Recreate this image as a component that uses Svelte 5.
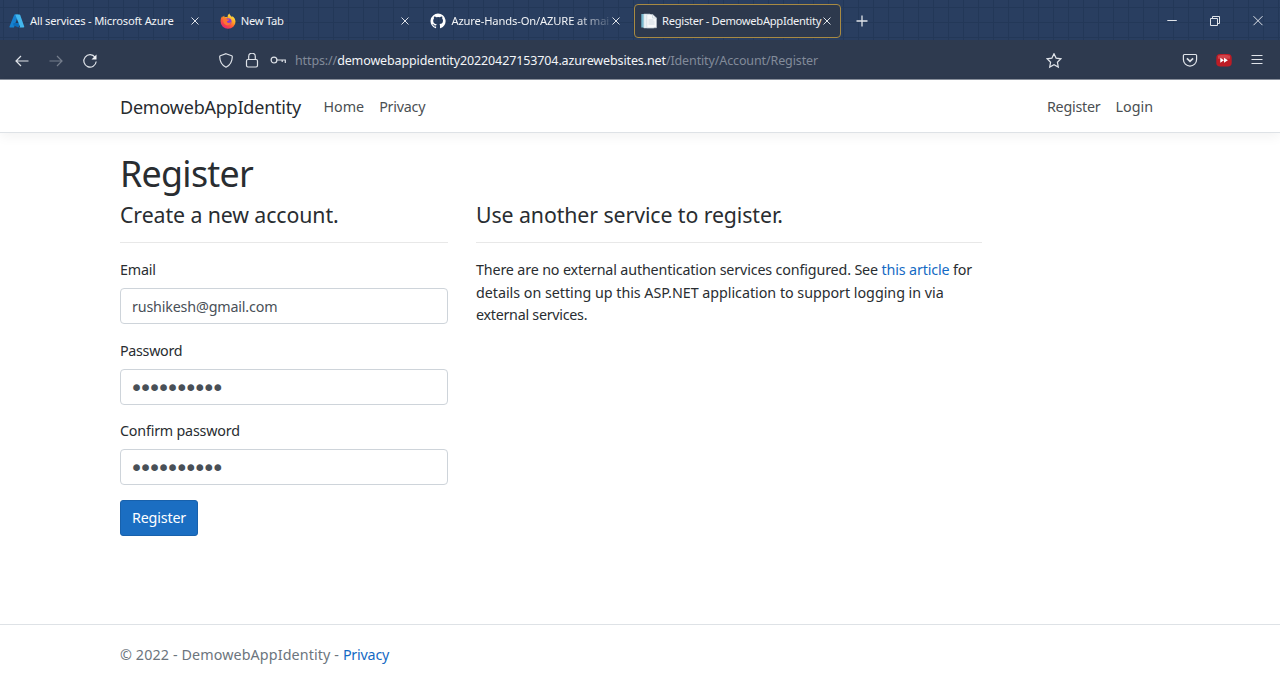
<script>
  const tabs = [
    { icon: 'azure', title: 'All services - Microsoft Azure', spacing: '-0.2px' },
    { icon: 'firefox', title: 'New Tab', spacing: '-0.25px' },
    { icon: 'github', title: 'Azure-Hands-On/AZURE at mai', spacing: '-0.14px', fade: true },
    { icon: 'page', title: 'Register - DemowebAppIdentity', spacing: '-0.3px', active: true }
  ];
  let email = $state('rushikesh@gmail.com');
  let password = $state('Password1!');
  let confirmation = $state('Password1!');
</script>

<div class="window">
  <div class="tabbar">
    {#each tabs as tab}
      <div class="tab" class:active={tab.active}>
        <svg class="favicon" viewBox="0 0 16 16">
          {#if tab.icon === 'azure'}
            <path d="M5.300 1.400h4L5 14.400H1.200c-.6 0-.9-.5-.7-1z" fill="#1681cf" />
            <path d="M4.500 10.100h7L9.500 14.600 4.200 12.300z" fill="#0b6dbb" />
            <path d="M6.200 1.400h4.200c.4 0 .7.2.8.6l4 11.500c.2.500-.2.900-.7.900h-4.200c.5 0 .8-.4.7-.9z" fill="#43b7ee" />
          {:else if tab.icon === 'firefox'}
            <defs>
              <linearGradient id="fx" x1=".85" y1=".05" x2=".25" y2="1">
                <stop offset="0" stop-color="#fff056" /><stop offset=".35" stop-color="#ffad24" />
                <stop offset=".65" stop-color="#ff5637" /><stop offset="1" stop-color="#e42178" />
              </linearGradient>
            </defs>
            <path d="M9.400.5c.3 1.900 1.600 2.400 2.700 3.700.3-.4.3-.8.2-1.300 2 1.300 3.200 3.500 3.200 5.900A7.400 7 0 0 1 .6 8.800C.5 6.500 1 4.600 2.300 3.100l.3 1.300 1.500-1.900.5 1.700c1-.3 2-.2 3 .2C7.400 2.800 8.100 1.400 9.400.5z" fill="url(#fx)" />
            <circle cx="8.200" cy="8.500" r="3.300" fill="#8b3bd2" />
            <path d="M3.200 5.500c1.700-.8 3.300-.1 4.100.9l2 .1c-.2 1.300-2 1.200-2.400 2.100 0 1.500 2.400 1.900 4.100.5-.2 2.400-2 3.500-3.900 3.200-2.700-.4-4.300-3-3.900-6.800z" fill="#ff7433" />
          {:else if tab.icon === 'github'}
            <path fill="#fff" d="M8 .6a7.500 7.500 0 0 0-2.400 14.600c.4.1.5-.2.5-.4v-1.300c-2.100.5-2.600-1-2.600-1-.3-.8-.8-1.100-.8-1.100-.7-.5.1-.5.1-.5.800.1 1.200.8 1.200.8.7 1.200 1.800.8 2.200.6.100-.5.300-.8.5-1-1.700-.2-3.500-.8-3.500-3.700 0-.8.3-1.500.8-2-.1-.2-.3-1 .1-2 0 0 .6-.2 2.100.7a7.300 7.300 0 0 1 3.800 0c1.400-1 2.100-.7 2.100-.7.4 1 .1 1.800.1 2 .5.500.8 1.200.8 2 0 2.900-1.800 3.500-3.500 3.700.3.200.5.700.5 1.400v2.100c0 .2.1.500.500.4A7.500 7.500 0 0 0 8 .6z" />
          {:else}
            <path d="M.3 1h3.500v13.500H.3z" fill="#77b9cf" />
            <path d="M2.800 1h6l4 3v11h-10z" fill="#e9f1f5" stroke="#bed0da" stroke-width=".5" />
            <path d="M5.800 1.500h6L15.500 5v9.800H5.800z" fill="#f6f8f9" stroke="#c2cdd4" stroke-width=".5" />
            <path d="M11.500 1.500V5h4M7.500 7h5M7.500 9h6M7.500 11h6" fill="none" stroke="#c2cfd7" stroke-width=".7" />
          {/if}
        </svg>
        <span class="title" class:fade={tab.fade} style:letter-spacing={tab.spacing}>{tab.title}</span>
        <svg class="close" viewBox="0 0 10 10"><path d="M1.500 1.500l7 7M8.500 1.500l-7 7" /></svg>
      </div>
    {/each}
    <svg class="plus" viewBox="0 0 14 14"><path d="M7 1.500v11M1.500 7h11" /></svg>
    <div class="controls">
      <svg viewBox="0 0 12 12"><path d="M1.300 6.500h9.500" /></svg>
      <svg viewBox="0 0 12 12"><path d="M1.500 4.500h7v7h-7zM3.500 4.500v-2h7v7h-2" /></svg>
      <svg viewBox="0 0 12 12"><path d="M1.500 2.200l9 9M10.500 2.200l-9 9" /></svg>
    </div>
  </div>

  <div class="toolbar">
    <svg class="back" viewBox="0 0 16 16"><path d="M14.500 8H2M7 3L2 8l5 5" /></svg>
    <svg class="forward" viewBox="0 0 16 16"><path d="M1.500 8H14M9 3l5 5-5 5" /></svg>
    <svg class="reload" viewBox="0 0 16 16"><path d="M13.100 4.300A6.200 6.200 0 1 0 14.200 8.500" /><path d="M14.500 1.500v5h-5z" fill="#f2f4f7" stroke="none" /></svg>
    <svg class="shield" viewBox="0 0 16 16"><path d="M8 .7l5.700 2.100c.5.200.6.400.6.900-.1 4.900-2.400 8.600-6.300 10.500C4.100 12.300 1.800 8.600 1.700 3.700c0-.5.1-.7.6-.9z" /></svg>
    <svg class="lock" viewBox="0 0 16 16"><rect x="2.500" y="6.500" width="11" height="7.500" rx="1.400" /><path d="M4.700 6.300V3.500a3.300 3.300 0 0 1 6.600 0v2.800" /></svg>
    <svg class="key" viewBox="0 0 16 16"><circle cx="4" cy="7.100" r="2.900" /><path d="M7 7h8.300v3M12.200 7v2" /></svg>
    <span class="url">https://<b>demowebappidentity20220427153704.azurewebsites.net</b>/Identity/Account/Register</span>
    <svg class="star" viewBox="0 0 16 16"><path d="M8 .7l2.100 4.400 4.800.7-3.500 3.400.9 4.900L8 11.800l-4.300 2.300.9-4.900L1.100 5.800l4.800-.7z" /></svg>
    <svg class="pocket" viewBox="0 0 16 16"><path d="M2.400 1.500h11.200c.6 0 1 .4 1 1v4a6.600 6.600 0 0 1-13.200 0v-4c0-.6.400-1 1-1z" /><path d="M4.900 5.300L8 8.300l3.100-3" stroke-width="1.700" /></svg>
    <svg class="skip" viewBox="0 0 16 14">
      <rect x=".3" y="0" width="15.400" height="12.500" rx="3.800" fill="#bd1c25" /><path d="M2 1.800q6-2 12 0v3H2z" fill="#d0434a" />
      <path d="M4.300 3.800L8 6.300 4.300 8.800zM8 3.800l3.900 2.500L8 8.800z" fill="#fff" />
    </svg>
    <svg class="menu" viewBox="0 0 14 14"><path d="M1.500 1.500h11M1.500 5.500h11M1.500 9.500h11" /></svg>
  </div>

  <div class="page">
    <header>
      <nav>
        <a class="brand" href="#home">DemowebAppIdentity</a>
        <a class="home" href="#home">Home</a>
        <a class="priv" href="#privacy">Privacy</a>
        <a class="reg" href="#register">Register</a>
        <a class="login" href="#login">Login</a>
      </nav>
    </header>
    <main>
      <h1>Register</h1>
      <div class="columns">
        <form>
          <h2>Create a new account.</h2>
          <hr />
          <label for="email">Email</label>
          <input id="email" type="text" bind:value={email} />
          <label class="tight" for="password">Password</label>
          <input id="password" type="password" bind:value={password} />
          <label for="confirm">Confirm password</label>
          <input id="confirm" type="password" bind:value={confirmation} />
          <button type="button">Register</button>
        </form>
        <section>
          <h2>Use another service to register.</h2>
          <hr />
          <p>
            <span class="p1">There are no external authentication services configured. See <a href="#article">this article</a> for</span><br />
            <span class="p2">details on setting up this ASP.NET application to support logging in via</span><br />
            <span class="p3">external services.</span>
          </p>
        </section>
      </div>
    </main>
    <footer><span>© 2022 - DemowebAppIdentity - <a href="#privacy">Privacy</a></span></footer>
  </div>
</div>

<style>
  :global(body) { margin: 0; background: #fff; overflow: hidden; }
  * { box-sizing: border-box; }
  .window { width: 1280px; height: 679px; display: flex; flex-direction: column; font-family: "Noto Sans", "Open Sans", sans-serif; }
  svg { flex: none; fill: none; stroke: #dfe3e9; stroke-width: 1.200; }
  .tabbar {
    height: 40px; flex: none; display: flex; align-items: center; padding-left: 2px;
    background-color: #293e60;
    background-image: linear-gradient(90deg, #233858 1px, transparent 1px), linear-gradient(#233858 1px, transparent 1px);
    background-size: 15px 15px; background-position: 3px 7px;
  }
  .tab { width: 207px; height: 34px; margin: 1px 3.700px 0 0; flex: none; display: flex; align-items: center; padding-left: 6px; border: 1px solid transparent; border-radius: 4px; color: #f1f3f6; font-size: 11.200px; }
  .tab.active { background: #2d394d; border-color: #a88a42; }
  .favicon { width: 16px; height: 16px; stroke: none; }
  .title { width: 161px; margin-left: 5px; white-space: nowrap; }
  .fade { mask-image: linear-gradient(90deg, #000 125px, transparent 164px); }
  .close { width: 10px; height: 10px; margin-left: -1.500px; stroke-width: 1; }
  .plus { width: 14px; height: 14px; margin: 1px 0 0 10px; stroke-width: 1.300; }
  .controls { margin: 0 16px 0 auto; display: flex; gap: 31px; }
  .controls svg { width: 12px; height: 12px; stroke-width: 1; }
  .toolbar { height: 40px; flex: none; display: flex; align-items: center; background: #2e3a4f; border-bottom: 1px solid #8a919d; padding: 2px 16px 0 14px; }
  .toolbar svg { width: 16px; height: 16px; }
  .forward { margin-left: 18px; opacity: .4; }
  .reload { margin-left: 18px; }
  .toolbar .shield { margin-left: 120px; }
  .toolbar .lock { margin-left: 10px; }
  .toolbar .key { margin-left: 10px; }
  .url { width: 751px; margin-left: 9px; font-size: 12.500px; letter-spacing: -.12px; white-space: nowrap; color: #828b9a; }
  .url b { font-weight: 400; color: #f3f5f8; }
  .toolbar .pocket { margin-left: 120px; }
  .toolbar .skip { margin-left: 18px; height: 14px; stroke: none; }
  .toolbar .menu { width: 14px; height: 14px; margin-left: auto; }
  .page { flex: 1; display: flex; flex-direction: column; background: #fff; font-size: 14.300px; line-height: 22.500px; color: #292d31; }
  a { color: #146ac4; text-decoration: none; }
  header { height: 53px; flex: none; border-bottom: 1px solid #dee2e6; box-shadow: 0 4px 11px rgba(0, 0, 0, .05); }
  nav { height: 54px; display: flex; align-items: center; padding: 0 127px 0 120px; white-space: nowrap; }
  nav a { color: #4b4f52; }
  nav .brand { color: #272b2f; font-size: 18px; letter-spacing: -.22px; width: 203.500px; }
  .priv { margin-left: 15px; letter-spacing: -.22px; }
  .reg { margin-left: auto; letter-spacing: -.22px; }
  .login { margin-left: 15px; }
  main { padding: 18px 120px 0; flex: 1; }
  h1 { margin: 0; font-weight: 400; font-size: 35.800px; line-height: 45px; letter-spacing: -.7px; }
  .columns { display: grid; grid-template-columns: 328px 506px; column-gap: 28px; }
  h2 { margin: 5px 0 0; font-weight: 400; font-size: 21.300px; line-height: 27px; letter-spacing: -.09px; white-space: nowrap; }
  hr { border: 0; border-top: 1px solid #e8e8e8; margin: 14px 0 15px; }
  label { display: block; margin-bottom: 7px; line-height: 23px; letter-spacing: -.2px; }
  label.tight { letter-spacing: -.3px; }
  input { display: block; width: 100%; height: 36px; margin: 0 0 14.500px; border: 1px solid #ced4da; border-radius: 4px; padding: 0 11px; color: #495057; font: 14.300px "Noto Sans", sans-serif; letter-spacing: -.17px; background: #fff; outline: 0; }
  input[type="password"] { font: 23px "DejaVu Sans", sans-serif; letter-spacing: -4.520px; padding: 2px 11px 0 8.700px; }
  button { display: block; height: 36px; width: 78px; padding: 0; border: 1px solid #1861ac; border-radius: 3px; background: #1b6ec2; color: #fff; font: 14.300px "Noto Sans", sans-serif; letter-spacing: -.15px; }
  p { margin: 0; padding-top: 1px; white-space: nowrap; }
  .p1 { letter-spacing: -.148px; }
  .p2 { letter-spacing: -.025px; }
  .p3 { letter-spacing: -.27px; }
  footer { height: 55px; flex: none; border-top: 1px solid #dee2e6; padding: 19px 120px 0; color: #6c757d; letter-spacing: .12px; }
  footer a { letter-spacing: -.2px; }
</style>
